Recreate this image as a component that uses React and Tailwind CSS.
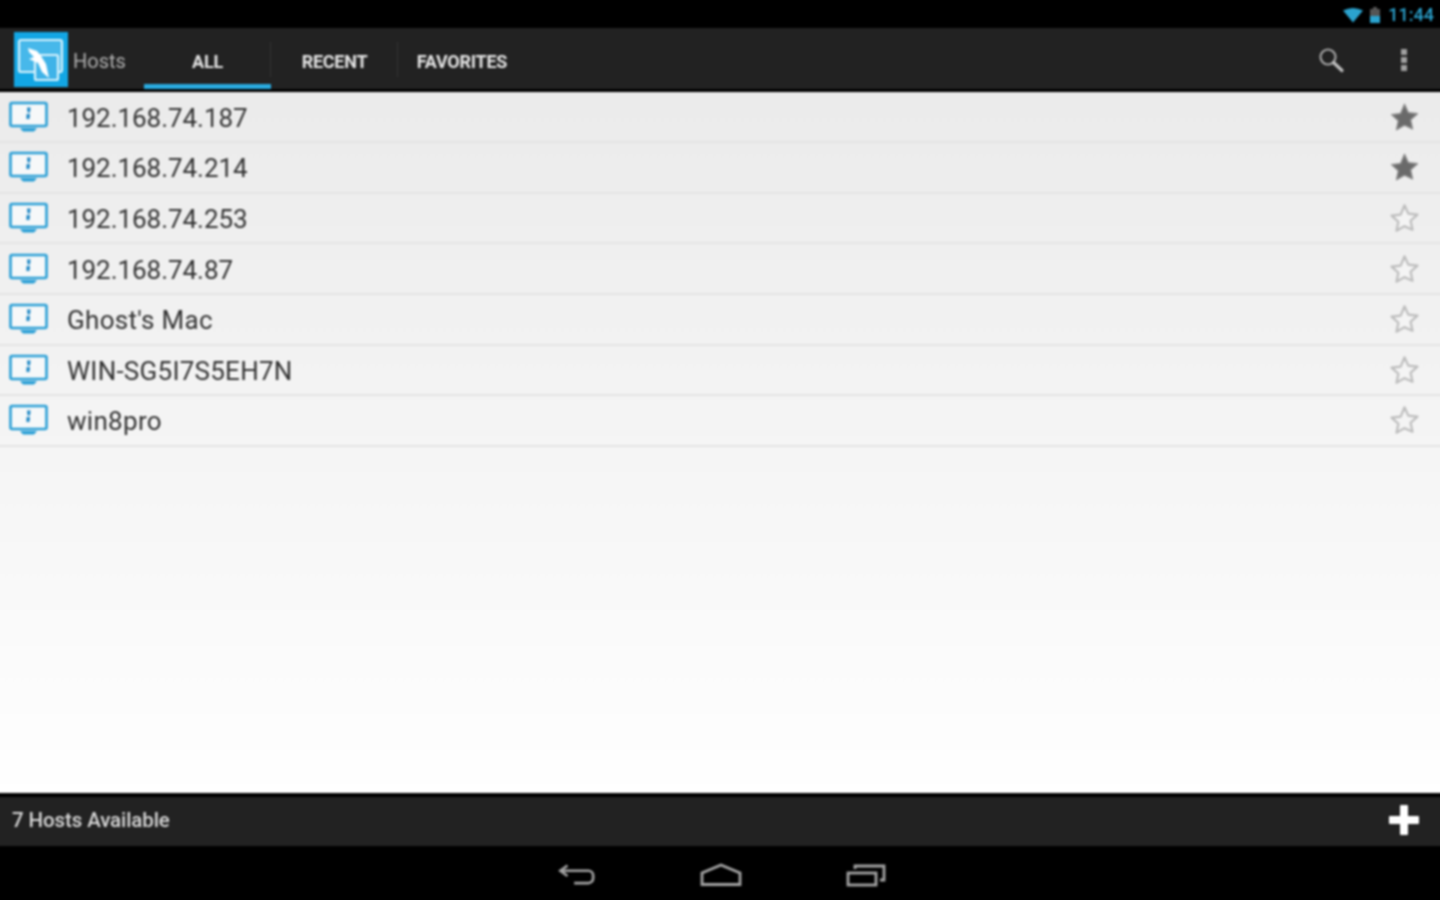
import React from "react";

const hosts = [
  { name: "192.168.74.187", fav: true, track: "tracking-[-0.05px]" },
  { name: "192.168.74.214", fav: true, track: "tracking-[-0.05px]" },
  { name: "192.168.74.253", fav: false, track: "tracking-[-0.05px]" },
  { name: "192.168.74.87", fav: false, track: "tracking-[-0.05px]" },
  { name: "Ghost's Mac", fav: false, track: "tracking-[0.3px]" },
  { name: "WIN-SG5I7S5EH7N", fav: false, track: "tracking-[0.25px]" },
  { name: "win8pro", fav: false, track: "tracking-[0.3px]" },
];

const STAR = "M17 2.5l4.2 9.2 10 1.1-7.5 6.7 2.1 9.9L17 25.4 8.2 30.4l2.1-9.9-7.5-6.7 10-1.1z";

function Star({ fav }) {
  return (
    <svg width="31" height="31" viewBox="0 0 34 34" className="block">
      {fav ? (
        <path d={STAR} fill="#6a6a6a" stroke="#8a8a8a" strokeWidth="1.4" strokeLinejoin="round" />
      ) : (
        <path d={STAR} fill="#f4f4f4" stroke="#bdbdbd" strokeWidth="2.4" strokeLinejoin="round" />
      )}
    </svg>
  );
}

function Monitor() {
  return (
    <svg width="40" height="32" viewBox="0 0 40 32" className="block">
      <rect x="1.5" y="2" width="36" height="23" rx="1.5" fill="#f6f8f9" stroke="#2a9fd6" strokeWidth="2.6" />
      <path d="M11 27h17l-3 3.5H14z" fill="#2a9fd6" />
      <path d="M18 6.5h3.6l-.6 5h-2.4zM17.6 13h3.4l-.6 5h-3z" fill="#1a85c4" />
    </svg>
  );
}

function Logo() {
  return (
    <div className="w-[54px] h-[55px] bg-[#13a6e4] flex items-center justify-center">
      <svg width="54" height="55" viewBox="0 0 54 55" className="block">
        <rect x="5" y="8" width="43" height="32" rx="2" fill="#47b8ea" stroke="#d8f2fc" strokeWidth="2.2" />
        <rect x="21" y="23" width="23" height="25" rx="1.5" fill="#3fb3e8" stroke="#d8f2fc" strokeWidth="2.2" />
        <path d="M14 16l9 3 4 5 5 8 3 14-7-6-4-9-9-4 5-2-5-5z" fill="#ffffff" />
      </svg>
    </div>
  );
}

function Tab({ label, active, width, divider }) {
  return (
    <div className="relative h-full flex items-center justify-center pt-[5px]" style={{ width }}>
      <span className="text-[18px] font-bold text-[#e4e4e4] tracking-[-0.25px]">{label}</span>
      {active && <div className="absolute left-0 right-0 bottom-0 h-[5px] bg-[#2aaadf]" />}
      {divider && <div className="absolute right-0 top-[14px] bottom-[12px] w-px bg-[#343434]" />}
    </div>
  );
}

export default function App() {
  return (
    <div className="w-[1440px] h-[900px] overflow-hidden bg-black">
      <div className="-m-[4px] w-[1448px] h-[908px] flex flex-col bg-black blur-[0.85px] font-['Roboto',sans-serif]">
        <div className="h-[32px] shrink-0 bg-black flex items-center justify-end pr-[10px] pt-[6px] gap-[5px]">
          <svg width="22" height="16" viewBox="0 0 22 16" className="block">
            <path d="M1 3.5Q11-1.5 21 3.5L11 15.5z" fill="#2ba3cf" />
          </svg>
          <svg width="12" height="18" viewBox="0 0 12 18" className="block">
            <path d="M4 1h4v2h3v14H1V3h3z" fill="#555" />
            <path d="M1 10h10v7H1z" fill="#2ba3cf" />
          </svg>
          <span className="text-[18px] font-medium leading-none text-[#2ba3cf] ml-[2px]">11:44</span>
        </div>

        <div className="h-[64px] shrink-0 bg-[#222222] border-b-[3px] border-black flex items-center">
          <div className="ml-[18px] mt-[2px]">
            <Logo />
          </div>
          <span className="ml-[5px] w-[71px] pt-[5px] text-[20px] text-[#b0b0b0]">Hosts</span>
          <div className="h-full flex">
            <Tab label="ALL" active width={127} divider />
            <Tab label="RECENT" width={127} divider />
            <Tab label="FAVORITES" width={128} />
          </div>
          <div className="ml-auto flex items-center pt-[2px]">
            <svg width="30" height="30" viewBox="0 0 30 30" className="block mr-[55px] mt-[1px]">
              <circle cx="12" cy="12" r="7.5" fill="none" stroke="#a5a5a5" strokeWidth="2.2" />
              <path d="M17.5 17.5L26 25.5" stroke="#c0c0c0" strokeWidth="3.2" strokeLinecap="round" />
            </svg>
            <div className="flex flex-col gap-[2px] mr-[37px]">
              <div className="w-[6px] h-[6px] bg-[#a0a0a0]" />
              <div className="w-[6px] h-[6px] bg-[#a0a0a0]" />
              <div className="w-[6px] h-[6px] bg-[#a0a0a0]" />
            </div>
          </div>
        </div>

        <div className="flex-1 min-h-0 pt-[0.6px] bg-gradient-to-b from-[#ebebeb] to-[#ffffff]">
          {hosts.map((h) => (
            <div
              key={h.name}
              className="h-[50.6px] border-b-2 border-[#e4e4e4] flex items-center pl-[13px] pr-[24.5px]"
            >
              <Monitor />
              <span className={`ml-[18px] pt-[2px] text-[26px] leading-none text-[#333333] ${h.track}`}>{h.name}</span>
              <div className="ml-auto pt-[1px]">
                <Star fav={h.fav} />
              </div>
            </div>
          ))}
        </div>

        <div className="h-[53px] shrink-0 bg-[#222222] border-t-[4px] border-black flex items-center justify-between pl-[16px] pr-[25px] pb-[2px]">
          <span className="text-[20.5px] font-medium text-[#d8d8d8] tracking-[-0.1px]">7 Hosts Available</span>
          <div className="relative w-[30px] h-[30px] -mt-[1px]">
            <div className="absolute left-[11px] top-0 w-[8px] h-[30px] rounded-[1px] bg-white" />
            <div className="absolute left-0 top-[11px] w-[30px] h-[8px] rounded-[1px] bg-white" />
          </div>
        </div>

        <div className="h-[58px] shrink-0 bg-black flex items-center justify-center gap-[105px] pb-[1px] pl-[4px]">
          <svg width="38" height="26" viewBox="0 0 40 26" className="block">
            <path d="M10 3L2.5 8.5 10 14" fill="none" stroke="#a3a3a3" strokeWidth="2.8" />
            <path d="M3 8.5h29a5 5 0 0 1 5 5v3a5 5 0 0 1-5 5H17" fill="none" stroke="#a3a3a3" strokeWidth="2.8" />
          </svg>
          <svg width="42" height="24" viewBox="0 0 42 24" className="block -ml-[1px]">
            <path d="M2 21.5V10L21 2l19 8v11.5z" fill="none" stroke="#a3a3a3" strokeWidth="2.8" />
          </svg>
          <svg width="40" height="24" viewBox="0 0 40 24" className="block -ml-[1px]">
            <rect x="2" y="10" width="28" height="12" fill="none" stroke="#a3a3a3" strokeWidth="2.8" />
            <path d="M9 6V3h29v14h-4" fill="none" stroke="#a3a3a3" strokeWidth="2.8" />
          </svg>
        </div>
      </div>
    </div>
  );
}
